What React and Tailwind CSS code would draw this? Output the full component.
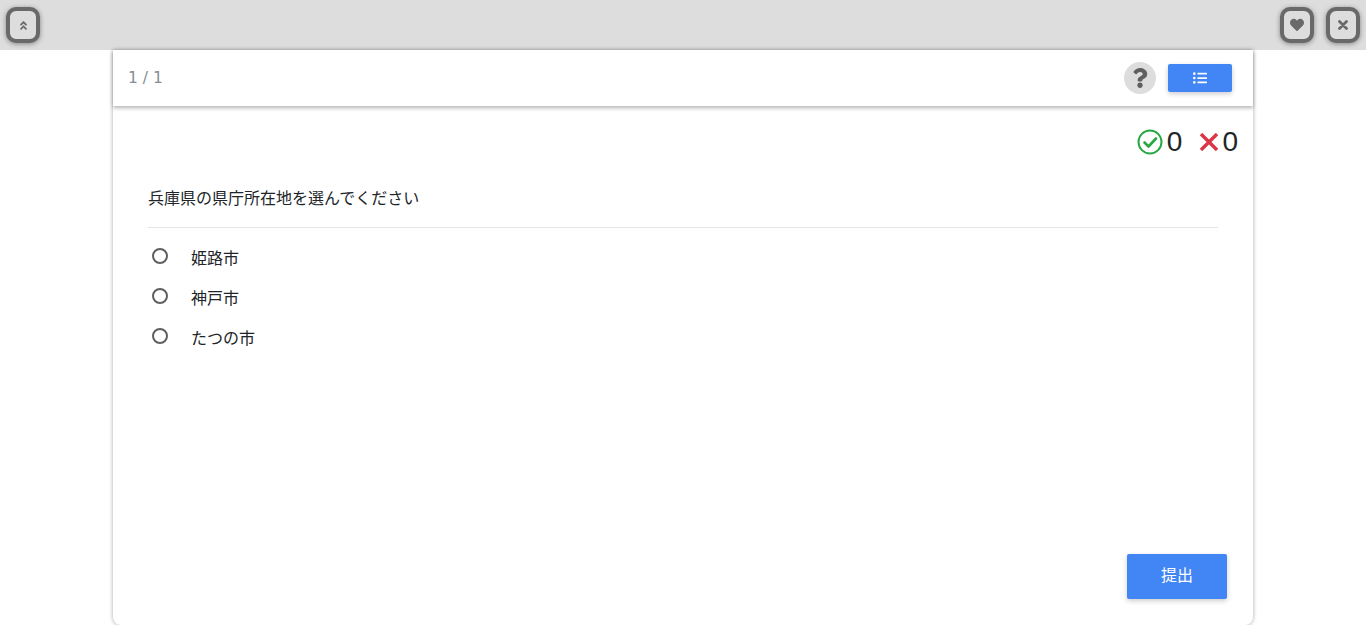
import React from "react";
import { FaAngleDoubleUp, FaHeart, FaQuestion, FaListUl } from "react-icons/fa";

const font = "font-['Roboto','Noto_Sans_CJK_JP',sans-serif]";

const ToolButton = ({ children }) => (
    <button className="w-[34px] h-[36px] rounded-[10px] border-[4px] border-[#696969] bg-[#dddddd] text-[#696969] flex items-center justify-center shadow-[0_1px_5px_rgba(0,0,0,0.4)]">
        {children}
    </button>
);

const choices = ["姫路市", "神戸市", "たつの市"];

const App = () => {
    return (
        <div className={`h-[625px] overflow-hidden bg-white flex flex-col ${font}`}>
            <div className="h-[50px] shrink-0 bg-[#dddddd] flex items-center justify-between px-[6px]">
                <ToolButton>
                    <FaAngleDoubleUp size={11} />
                </ToolButton>
                <div className="flex gap-[12px]">
                    <ToolButton>
                        <FaHeart size={14} />
                    </ToolButton>
                    <ToolButton>
                        <svg width="10" height="10" viewBox="0 0 10 10" fill="none">
                            <path d="M1.5 1.5l7 7M8.5 1.5l-7 7" stroke="#696969" strokeWidth="2.8" strokeLinecap="round" />
                        </svg>
                    </ToolButton>
                </div>
            </div>

            <div className="mx-[113px] flex-1 flex flex-col rounded-b-[8px] bg-white shadow-[0_0_4px_rgba(0,0,0,0.35)]">
                <div className="h-[56px] shrink-0 flex items-center justify-between pl-[15px] pr-[21px] shadow-[0_2px_4px_rgba(0,0,0,0.3)]">
                    <span className="text-[15.5px] mt-[1px] text-[#868e96] font-['DejaVu_Sans',sans-serif]">1 / 1</span>
                    <div className="flex items-center gap-[12px]">
                        <div className="w-[32px] h-[32px] rounded-full bg-[#dddddd] text-[#5f5f5f] flex items-center justify-center">
                            <FaQuestion size={20} />
                        </div>
                        <button className="w-[64px] h-[28px] rounded-[2px] bg-[#4285f4] text-white flex items-center justify-center shadow-[0_2px_5px_rgba(0,0,0,0.2)]">
                            <FaListUl size={14} />
                        </button>
                    </div>
                </div>

                <div className="flex-1 flex flex-col">
                    <div className="flex justify-end items-center pt-[20px] pr-[15px] h-[52px] text-[28px] leading-none text-[#212529] font-['Liberation_Sans',sans-serif]">
                        <svg width="26" height="26" viewBox="0 0 26 26" fill="none" className="mr-[4px]">
                            <circle cx="13" cy="13" r="11.5" stroke="#28a745" strokeWidth="2" />
                            <path d="M7.5 13.5l4 4 7.5-8" stroke="#28a745" strokeWidth="2.6" strokeLinecap="round" strokeLinejoin="round" />
                        </svg>
                        <span>0</span>
                        <svg width="18" height="18" viewBox="0 0 18 18" fill="none" className="ml-[18px] mr-[4px]">
                            <path d="M1 1l16 16M17 1L1 17" stroke="#dc3545" strokeWidth="3.4" />
                        </svg>
                        <span>0</span>
                    </div>

                    <div className="mx-[35px] mt-[29px] pb-[16px] border-b border-[#e5e5e5] text-[16px] leading-[24px] text-[#212529]">
                        兵庫県の県庁所在地を選んでください
                    </div>

                    <div className="ml-[39px] mt-[11px] flex flex-col">
                        {choices.map((choice) => (
                            <label key={choice} className="h-[40px] flex items-center gap-[23px] text-[16px] text-[#212529]">
                                <span className="w-[16px] h-[16px] -mt-[7px] rounded-full border-2 border-[#5f5f5f]" />
                                <span>{choice}</span>
                            </label>
                        ))}
                    </div>

                    <div className="mt-auto flex justify-end pr-[26px] pb-[26px]">
                        <button className="w-[100px] h-[45px] pb-[2px] rounded-[2px] bg-[#4285f4] text-white text-[16px] shadow-[0_2px_5px_rgba(0,0,0,0.2)]">
                            提出
                        </button>
                    </div>
                </div>
            </div>
        </div>
    );
};

export default App;
